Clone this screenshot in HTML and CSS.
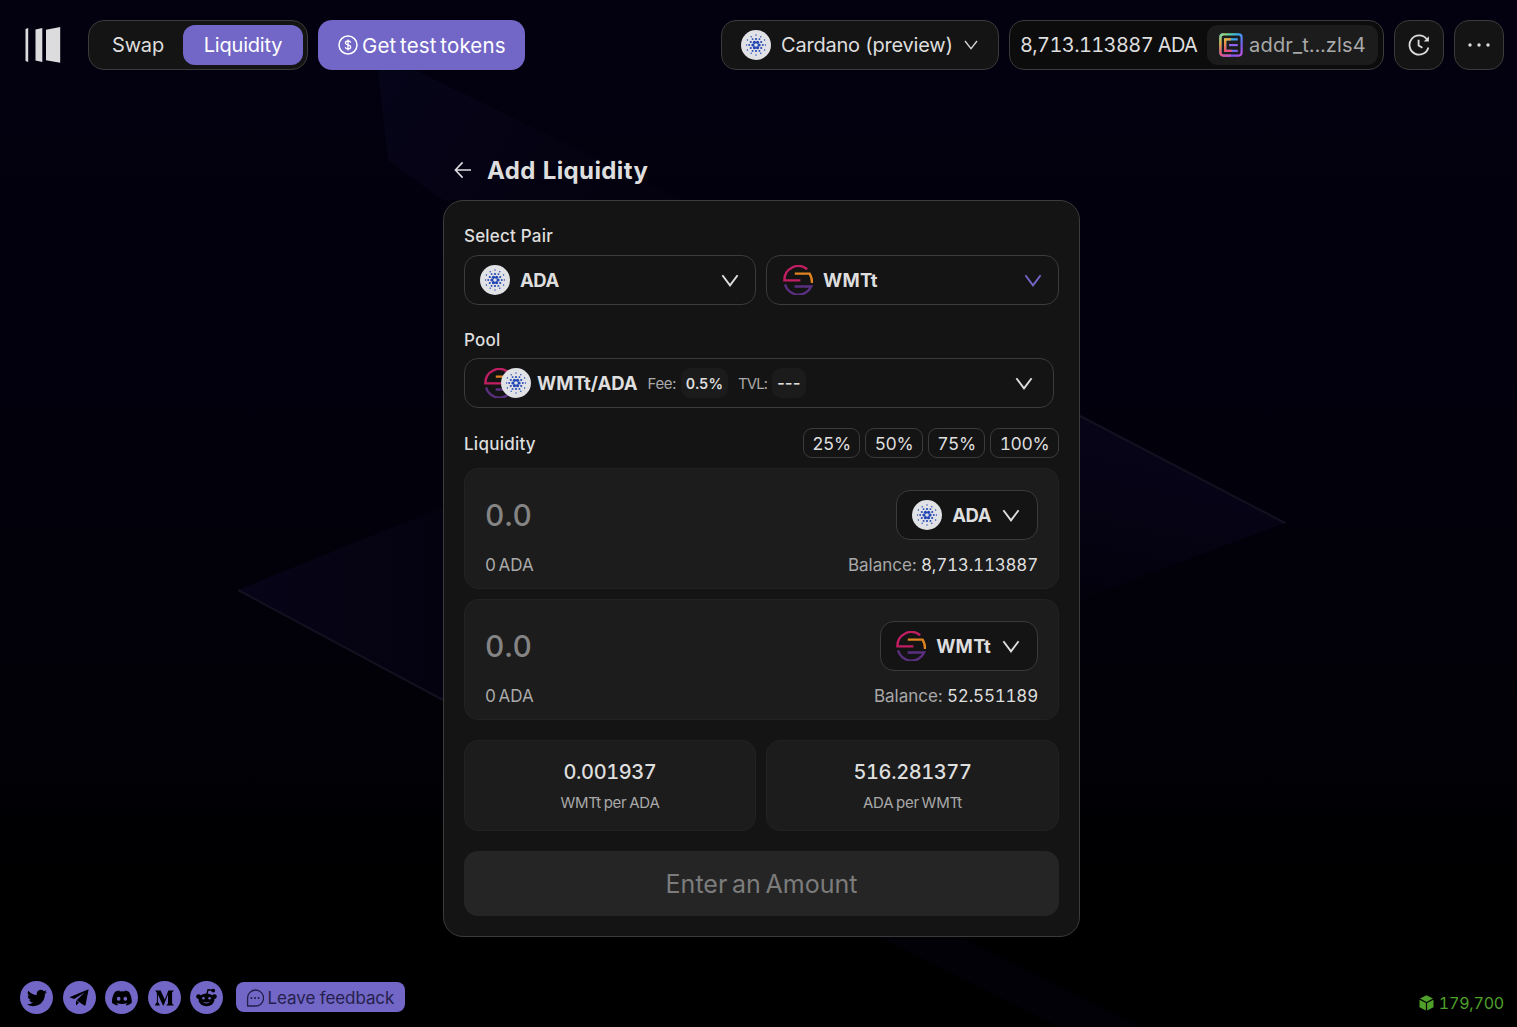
FILE: index.html
```html
<!DOCTYPE html>
<html lang="en">
<head>
<meta charset="utf-8">
<title>Add Liquidity</title>
<link rel="stylesheet" href="styles.css">
</head>
<body>
<svg class="defs" width="0" height="0" aria-hidden="true">
  <defs>
    <g id="ring-dots" fill="#2246b4">
      <circle cx="18.1" cy="15" r="1.6"/><circle cx="16.55" cy="17.7" r="1.6"/><circle cx="13.45" cy="17.7" r="1.6"/><circle cx="11.9" cy="15" r="1.6"/><circle cx="13.45" cy="12.3" r="1.6"/><circle cx="16.55" cy="12.3" r="1.6"/>
      <circle cx="20.2" cy="18" r="1.1"/><circle cx="15" cy="21" r="1.1"/><circle cx="9.8" cy="18" r="1.1"/><circle cx="9.8" cy="12" r="1.1"/><circle cx="15" cy="9" r="1.1"/><circle cx="20.2" cy="12" r="1.1"/>
      <circle cx="21.8" cy="15" r=".95"/><circle cx="18.4" cy="20.9" r=".95"/><circle cx="11.6" cy="20.9" r=".95"/><circle cx="8.2" cy="15" r=".95"/><circle cx="11.6" cy="9.1" r=".95"/><circle cx="18.4" cy="9.1" r=".95"/>
      <circle cx="24.4" cy="15" r=".7"/><circle cx="19.8" cy="23.2" r=".7"/><circle cx="10.2" cy="23.2" r=".7"/><circle cx="5.6" cy="15" r=".7"/><circle cx="10.2" cy="6.8" r=".7"/><circle cx="19.8" cy="6.8" r=".7"/>
      <circle cx="23.6" cy="20" r=".7"/><circle cx="15" cy="25" r=".7"/><circle cx="6.4" cy="20" r=".7"/><circle cx="6.4" cy="10" r=".7"/><circle cx="15" cy="5" r=".7"/><circle cx="23.6" cy="10" r=".7"/>
    </g>
    <symbol id="ada" viewBox="0 0 30 30"><circle cx="15" cy="15" r="15" fill="#e1e2e6"/><use href="#ring-dots"/></symbol>
    <symbol id="wmt" viewBox="0 0 30 30">
      <g fill="none" stroke-width="2.4">
        <path stroke="#c21e63" d="M24.2 4.2A14 14 0 0 0 1.4 15.4H17.4"/>
        <path stroke="#e0841f" d="M11.8 8.6H26.6Q29 12.4 29.1 18"/>
        <path stroke="#5a2f80" d="M2 19.4A14 14 0 0 0 28.2 21.5H11.6"/>
      </g>
    </symbol>
    <symbol id="chev" viewBox="0 0 18 13"><path d="M1.4 1.2L9 11.4L16.6 1.2" fill="none" stroke="currentColor" stroke-width="1.9"/></symbol>
    <linearGradient id="rainbow" x1="1" y1="1" x2="23" y2="23" gradientUnits="userSpaceOnUse">
      <stop offset="0" stop-color="#f2c53c"/><stop offset=".2" stop-color="#5fd6a0"/><stop offset=".42" stop-color="#36a9f0"/><stop offset=".75" stop-color="#7a5cf0"/><stop offset="1" stop-color="#c650e0"/>
    </linearGradient>
    <linearGradient id="warm" x1="1" y1="1" x2="14" y2="24" gradientUnits="userSpaceOnUse">
      <stop offset="0" stop-color="#58d7c0"/><stop offset=".3" stop-color="#f0a73c"/><stop offset=".65" stop-color="#f0506e"/><stop offset="1" stop-color="#b452e0"/>
    </linearGradient>
  </defs>
</svg>

<svg class="backdrop" viewBox="0 0 1517 1027" preserveAspectRatio="none" aria-hidden="true">
  <defs>
    <linearGradient id="shardTop" x1="375" y1="75" x2="600" y2="220" gradientUnits="userSpaceOnUse"><stop offset="0" stop-color="#060418"/><stop offset="1" stop-color="#04020f"/></linearGradient>
    <linearGradient id="shardLeft" x1="240" y1="590" x2="445" y2="590" gradientUnits="userSpaceOnUse"><stop offset="0" stop-color="#080418"/><stop offset="1" stop-color="#04020f"/></linearGradient>
    <linearGradient id="shardRight" x1="1150" y1="460" x2="1120" y2="600" gradientUnits="userSpaceOnUse"><stop offset="0" stop-color="#070418"/><stop offset="1" stop-color="#03010c"/></linearGradient>
  </defs>
  <path fill="url(#shardTop)" d="M378 70H415L680 200H443L388 160Z"/>
  <path fill="url(#shardLeft)" d="M238 590L443 507V700Z"/>
  <path fill="url(#shardRight)" d="M1080 416L1285 523L1180 562L1080 600Z"/>
  <path fill="#020108" d="M880 937H960L1140 1027H1060Z"/>
  <path d="M238 590L443 700M1080 416L1285 523" fill="none" stroke="#13111f" stroke-width="2"/>
</svg>

<header class="topbar">
  <div class="topbar-side">
    <svg class="logo" width="36" height="36" viewBox="0 0 36 36" fill="#dcdcdf"><path d="M0.5 2L3.2 1V35L0.5 34Z"/><path d="M10.5 2.5L17.3 1V35L10.5 33.5Z"/><path d="M21 2.8L35.2 0V35.8L21 33.2Z"/></svg>
    <nav class="tabs">
      <a class="tab"><span>Swap</span></a>
      <a class="tab tab-active"><span>Liquidity</span></a>
    </nav>
    <button class="faucet">
      <svg width="20" height="20" viewBox="0 0 20 20" fill="none" stroke="#fff" stroke-width="1.5"><circle cx="10" cy="10" r="9"/><path stroke-width="1.3" d="M12.7 7.6C12.3 6.4 11.2 6 10 6C8.5 6 7.4 6.7 7.4 7.9C7.4 10.6 12.7 9.2 12.7 12C12.7 13.2 11.6 14 10 14C8.6 14 7.5 13.4 7.2 12.2M10 4.4V15.6"/></svg>
      <span>Get test tokens</span>
    </button>
  </div>
  <div class="topbar-side">
    <button class="network">
      <svg width="30" height="30"><use href="#ada"/></svg>
      <span>Cardano (preview)</span>
      <svg class="net-chev" width="14" height="10" viewBox="0 0 14 10"><path d="M1 1L7 8.6L13 1" fill="none" stroke="#d8d8d8" stroke-width="1.3"/></svg>
    </button>
    <div class="wallet">
      <span class="wallet-balance">8,713.113887 ADA</span>
      <div class="address">
        <svg width="24" height="24" viewBox="0 0 24 24" fill="none" stroke-width="2.2">
          <rect x="1.4" y="1.4" width="21.2" height="21.2" rx="3" stroke="url(#rainbow)"/>
          <path stroke="url(#warm)" d="M12 22.6H4.4Q1.4 22.6 1.4 19.6V4.4Q1.4 1.4 4.4 1.4"/>
          <path stroke="url(#rainbow)" d="M18.8 6.4H6.2V17.8H18.8"/>
          <path stroke="url(#warm)" d="M12 6.4H6.2V17.8H13"/>
          <path stroke="#8a62ee" d="M10 12.1H18.8"/>
        </svg>
        <span>addr_t...zls4</span>
      </div>
    </div>
    <button class="square">
      <svg width="22" height="22" viewBox="0 0 22 22" fill="none" stroke="#dcdcdc" stroke-width="1.8"><path d="M18.6 5A9.6 9.6 0 1 0 20.4 13.5"/><path d="M10.6 5.8V11.4L14.4 13.8"/><path d="M20.9 2.2V7.4H15.8Z" fill="#dcdcdc" stroke="none"/></svg>
    </button>
    <button class="square">
      <svg width="24" height="4" viewBox="0 0 24 4" fill="#dcdcdc"><circle cx="3" cy="2" r="1.7"/><circle cx="12" cy="2" r="1.7"/><circle cx="21" cy="2" r="1.7"/></svg>
    </button>
  </div>
</header>

<main class="page">
  <div class="heading">
    <svg width="18" height="18" viewBox="0 0 18 18" fill="none" stroke="#dedee2" stroke-width="1.6"><path d="M17 9H1.6M8.6 1.4L1.4 9L8.6 16.6"/></svg>
    <h1>Add Liquidity</h1>
  </div>

  <section class="card">
    <div class="label">Select Pair</div>
    <div class="pair">
      <button class="select"><svg width="30" height="30"><use href="#ada"/></svg><span class="token token-ada">ADA</span><svg class="chev" width="18" height="13"><use href="#chev"/></svg></button>
      <button class="select select-wmt"><svg width="30" height="30"><use href="#wmt"/></svg><span class="token token-wmt">WMTt</span><svg class="chev chev-accent" width="18" height="13"><use href="#chev"/></svg></button>
    </div>

    <div class="label label-pool">Pool</div>
    <button class="select pool">
      <span class="stack"><svg width="30" height="30"><use href="#wmt"/></svg><svg class="stack-top" width="30" height="30"><use href="#ada"/></svg></span>
      <span class="token">WMTt/ADA</span>
      <span class="meta">Fee:</span><span class="chip">0.5%</span>
      <span class="meta meta-tvl">TVL:</span><span class="chip chip-empty">---</span>
      <svg class="chev" width="18" height="13"><use href="#chev"/></svg>
    </button>

    <div class="liq-row">
      <div class="label-inline">Liquidity</div>
      <div class="percents">
        <button class="pct p25">25%</button><button class="pct p50">50%</button><button class="pct p75">75%</button><button class="pct p100">100%</button>
      </div>
    </div>

    <div class="amounts">
      <div class="amount">
        <div class="amount-line"><span class="value">0.0</span>
          <button class="select small"><svg width="30" height="30"><use href="#ada"/></svg><span class="token token-ada">ADA</span><svg class="chev" width="18" height="13"><use href="#chev"/></svg></button></div>
        <div class="amount-line sub"><span class="fiat">0 ADA</span><span class="balance">Balance: <b>8,713.113887</b></span></div>
      </div>
      <div class="amount">
        <div class="amount-line"><span class="value">0.0</span>
          <button class="select small"><svg width="30" height="30"><use href="#wmt"/></svg><span class="token token-wmt">WMTt</span><svg class="chev" width="18" height="13"><use href="#chev"/></svg></button></div>
        <div class="amount-line sub"><span class="fiat">0 ADA</span><span class="balance">Balance: <b>52.551189</b></span></div>
      </div>
    </div>

    <div class="rates">
      <div class="rate"><span class="rate-value">0.001937</span><span class="rate-unit">WMTt per ADA</span></div>
      <div class="rate"><span class="rate-value">516.281377</span><span class="rate-unit">ADA per WMTt</span></div>
    </div>

    <button class="submit">Enter an Amount</button>
  </section>
</main>

<footer class="footer">
  <div class="social">
    <a class="dot"><svg width="20" height="20" viewBox="0 0 24 24"><path d="M23.95 4.57a10 10 0 0 1-2.82.77 4.96 4.96 0 0 0 2.16-2.72 9.9 9.9 0 0 1-3.12 1.19 4.92 4.92 0 0 0-8.38 4.48C7.69 8.1 4.07 6.13 1.64 3.16a4.92 4.92 0 0 0 1.52 6.57 4.9 4.9 0 0 1-2.23-.61v.06a4.92 4.92 0 0 0 3.95 4.83 5 5 0 0 1-2.21.08 4.94 4.94 0 0 0 4.6 3.42A9.87 9.87 0 0 1 0 19.54a14 14 0 0 0 7.55 2.21c9.05 0 14-7.5 14-13.98 0-.21 0-.42-.02-.63a9.94 9.94 0 0 0 2.42-2.57z"/></svg></a>
    <a class="dot"><svg width="20" height="17" viewBox="0 0 20 17"><path d="M19.6.3L.4 8.2L5.2 10L15.5 3.6L7.6 11.2L15.2 16.4Q16.3 16.9 16.6 15.7Z"/><path d="M7 11.6V16.4L10 13.7Z"/></svg></a>
    <a class="dot"><svg width="20" height="20" viewBox="0 0 24 24"><path d="M20.32 4.37a19.8 19.8 0 0 0-4.89-1.52l-.62 1.25a18.3 18.3 0 0 0-5.48 0L8.7 2.85A19.7 19.7 0 0 0 3.68 4.37C.53 9.05-.32 13.58.1 18.06a19.9 19.9 0 0 0 6 3.03l1.22-2a13 13 0 0 1-1.87-.9l.37-.29c3.93 1.8 8.18 1.8 12.06 0l.38.29a12 12 0 0 1-1.88.9l1.23 2a19.8 19.8 0 0 0 6-3.03c.5-5.18-.84-9.68-3.29-13.69zM8.02 15.33c-1.18 0-2.16-1.08-2.16-2.42s.96-2.42 2.16-2.42 2.18 1.1 2.16 2.42c0 1.34-.96 2.42-2.16 2.42zm7.97 0c-1.18 0-2.15-1.08-2.15-2.42s.95-2.42 2.15-2.42 2.18 1.1 2.16 2.42c0 1.34-.95 2.42-2.16 2.42z"/></svg></a>
    <a class="dot"><svg width="19" height="16" viewBox="0 0 19 16"><path d="M.2.5H5.6L9.8 9.6L13.4.5H18.6V1L17.1 2.5V13.5L18.6 15V15.5H11.6V15L13 13.5V4.6L8.6 15.5H8L2.9 4.6V12L4.8 14.9V15.5H0V14.9L1.9 12V3Z"/></svg></a>
    <a class="dot"><svg width="21" height="20" viewBox="0 0 21 20"><path fill="none" stroke="#000" stroke-width="1.3" d="M10.7 7L12 1.8L16.4 2.2"/><circle cx="17.2" cy="2.6" r="1.9"/><circle cx="2.6" cy="8.6" r="2.4"/><circle cx="18.4" cy="8.6" r="2.4"/><ellipse cx="10.5" cy="11.8" rx="8" ry="6.4"/><g fill="#7266c6"><circle cx="7.4" cy="10.2" r="1.3"/><circle cx="13.6" cy="10.2" r="1.3"/><path d="M6.8 13.8Q10.5 17.4 14.2 13.8Q10.5 15.4 6.8 13.8Z"/></g></svg></a>
    <button class="feedback">
      <svg width="18" height="18" viewBox="0 0 18 18" fill="none" stroke="#251f4c" stroke-width="1.3"><path d="M1.6 17V9.6A8 8 0 1 1 9 17Z"/><path stroke-width="1.8" d="M4.6 9H6.2M8.2 9H9.8M11.8 9H13.4"/></svg>
      <span>Leave feedback</span>
    </button>
  </div>
  <div class="block">
    <svg width="15" height="16" viewBox="0 0 15 16" fill="#4ea02a"><path d="M7.5 .3L14 3.5L7.5 6.9L1 3.5Z"/><path d="M.5 4.8L6.9 8V15.6L.5 12.3Z"/><path d="M14.5 4.8L8.1 8V15.6L14.5 12.3Z"/></svg>
    <span>179,700</span>
  </div>
</footer>
</body>
</html>
```
FILE: styles.css
```css
* { box-sizing: border-box; }
html, body { height: 100%; }
body {
  margin: 0;
  min-height: 1027px;
  display: flex;
  flex-direction: column;
  font-family: Inter, "Liberation Sans", sans-serif;
  font-size: 20px;
  font-variant-numeric: tabular-nums;
  color: #dedede;
  background: linear-gradient(#03000f 0, #03000e 30%, #010106 75%, #000 88%);
  overflow: hidden;
}
button { font: inherit; font-variant-numeric: inherit; color: inherit; margin: 0; padding: 0; border: 0; background: none; }
svg { display: block; flex: none; }
span, b { white-space: nowrap; }
.defs { position: absolute; }
.backdrop { position: absolute; inset: 0; width: 100%; height: 100%; z-index: -1; }

.topbar { display: flex; justify-content: space-between; padding: 20px 13px 0 25px; }
.topbar-side { display: flex; align-items: center; gap: 10px; height: 50px; }
.logo { margin-right: 17px; }
.tabs { display: flex; width: 220px; height: 50px; padding: 4px; border: 1px solid #3b3b3b; border-radius: 16px; background: #141414; }
.tab { display: flex; align-items: center; justify-content: center; width: 90px; border-radius: 12px; letter-spacing: -0.2px; }
.tab-active { width: 120px; background: #7266c6; color: #fff; }
.faucet { display: flex; align-items: center; gap: 4px; width: 207px; height: 50px; padding-left: 20px; border-radius: 14px; background: #7266c6; color: #fff; font-size: 20.5px; word-spacing: -2px; letter-spacing: 0.15px; }
.network, .wallet, .square { display: flex; align-items: center; height: 50px; border: 1px solid #3b3b3b; border-radius: 15px; background: #141414; }
.network { width: 278px; padding-left: 19px; gap: 10px; letter-spacing: -0.22px; }
.net-chev { margin-left: auto; margin-right: 20px; }
.wallet { width: 375px; padding: 0 5px 0 10px; justify-content: space-between; background: #0c0c0d; }
.wallet-balance { letter-spacing: -0.62px; }
.address { display: flex; align-items: center; gap: 6px; width: 171px; height: 40px; padding-left: 12px; border-radius: 11px; background: #1c1c1c; color: #a9a9a9; letter-spacing: 0.2px; }
.square { width: 50px; justify-content: center; }

.page { width: 637px; margin: 85px 0 0 443px; }
.heading { display: flex; align-items: center; gap: 15px; height: 30px; padding-left: 11px; }
h1 { margin: 2px 0 0; font-size: 24px; line-height: 30px; font-weight: 700; letter-spacing: 0.4px; }
.card { margin-top: 15px; height: 737px; padding: 20px; border: 1px solid #3b3b3b; border-radius: 20px; background: #141414; }
.label { height: 31px; line-height: 31px; margin-bottom: 3px; font-size: 17px; font-weight: 500; letter-spacing: 0.2px; }
.label-pool { margin-bottom: 2px; }
.pair { display: grid; grid-template-columns: 292px 293px; gap: 10px; margin-bottom: 20px; }
.select { display: flex; align-items: center; height: 50px; padding: 0 16px 0 15px; border: 1px solid #3b3b3b; border-radius: 14px; background: #141414; text-align: left; }
.select-wmt { padding-left: 16px; }
.token { margin-left: 10px; font-weight: 700; font-size: 18.5px; }
.token-ada { letter-spacing: -0.5px; }
.token-wmt { letter-spacing: 0.3px; }
.chev { margin-left: auto; color: #dedede; }
.chev-accent { color: #7266c6; }
.pool { width: 590px; padding: 0 20px 0 19px; margin-bottom: 20px; }
.stack { display: flex; }
.stack-top { margin-left: -13px; }
.pool .token { margin-left: 6px; }
.meta { margin-left: 10px; font-size: 15px; letter-spacing: -0.4px; color: #a9a9a9; }
.meta-tvl { letter-spacing: -0.9px; }
.chip { display: flex; align-items: center; justify-content: center; height: 30px; margin-left: 5px; padding: 0 5px; border-radius: 9px; background: #1b1b1b; font-size: 14.5px; font-weight: 600; }
.chip-empty { font-size: 17px; font-weight: 500; font-variant-numeric: normal; }
.liq-row { display: flex; justify-content: space-between; align-items: center; height: 30px; margin-bottom: 10px; }
.label-inline { padding-top: 1px; font-size: 17px; font-weight: 500; letter-spacing: 0.25px; }
.percents { display: flex; gap: 5px; }
.pct { height: 30px; border: 1px solid #3b3b3b; border-radius: 9px; font-size: 17.5px; letter-spacing: -0.4px; }
.p25, .p75 { width: 57px; }
.p50 { width: 58px; }
.p100 { width: 69px; }
.amounts { display: grid; gap: 10px; margin-bottom: 20px; }
.amount { height: 121px; padding: 21px 20px 0; border: 1px solid #222; border-radius: 14px; background: #1c1c1c; }
.amount-line { display: flex; justify-content: space-between; align-items: center; }
.value { margin-top: -1px; font-size: 30px; font-weight: 500; color: #848484; }
.small { padding-right: 17px; }
.small .chev { margin-left: 11px; }
.sub { margin-top: 13px; height: 24px; font-size: 17px; color: #a9a9a9; }
.fiat { word-spacing: -2px; }
.balance b { font-weight: 400; letter-spacing: -0.2px; color: #dedede; }
.rates { display: grid; grid-template-columns: 292px 293px; gap: 10px; margin-bottom: 20px; }
.rate { display: flex; flex-direction: column; align-items: center; height: 91px; padding-top: 18px; border: 1px solid #222; border-radius: 14px; background: #1c1c1c; }
.rate-value { line-height: 26px; font-size: 20px; font-weight: 500; letter-spacing: -0.4px; }
.rate-unit { margin-top: 7px; line-height: 22px; font-size: 15px; letter-spacing: -0.25px; word-spacing: -1px; color: #a9a9a9; }
.submit { display: block; width: 100%; height: 65px; border-radius: 14px; background: #252525; color: #7c7c7c; font-size: 25px; word-spacing: -2px; }

.footer { display: flex; justify-content: space-between; padding: 44px 13px 0 20px; }
.social { display: flex; align-items: center; gap: 9.5px; height: 33px; }
.dot { display: flex; align-items: center; justify-content: center; width: 33px; height: 33px; border-radius: 50%; background: #7266c6; }
.feedback { display: flex; align-items: center; gap: 4px; width: 169px; height: 30px; margin: -1px 0 0 3px; padding: 1px 0 0 10px; border-radius: 8px; background: #7266c6; color: #251f4c; font-size: 17px; letter-spacing: -0.08px; }
.block { display: flex; align-items: center; gap: 5px; margin-top: 12px; height: 20px; color: #4ea02a; font-size: 16px; letter-spacing: -0.2px; }
```
